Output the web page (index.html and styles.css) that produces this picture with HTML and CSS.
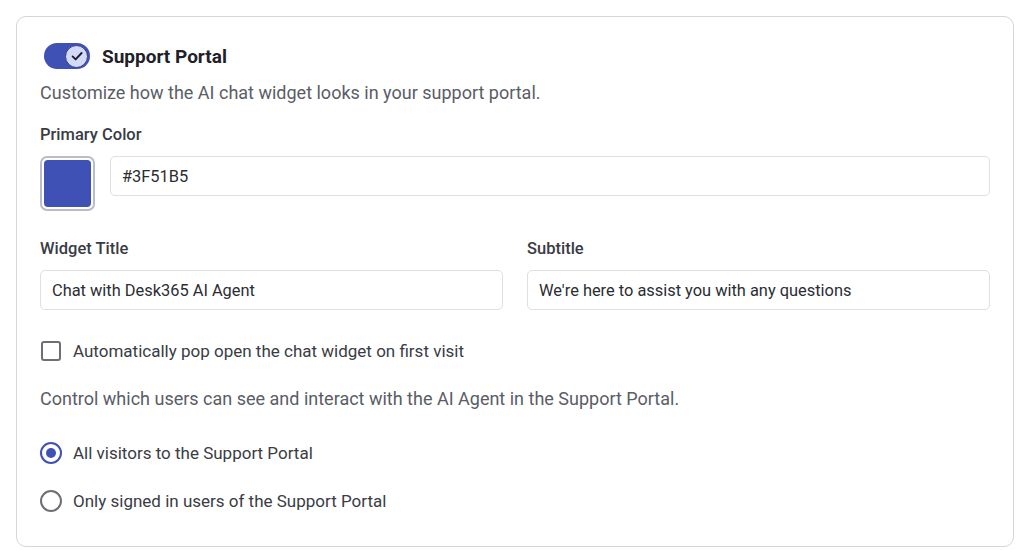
FILE: index.html
```html
<!DOCTYPE html>
<html lang="en">
<head>
    <meta charset="UTF-8">
    <meta name="viewport" content="width=device-width, initial-scale=1.0">
    <title>Support Portal</title>
    <link rel="stylesheet" href="styles.css">
</head>
<body>
    <div class="card">
        <!-- 开关 + 标题 -->
        <div class="card-head">
            <span class="switch">
                <span class="switch-thumb">
                    <svg width="16" height="16" viewBox="0 0 16 16"><path d="M3.6 8.4l3 3L12.6 5" fill="none" stroke="#1b1d2b" stroke-width="1.9" stroke-linecap="round" stroke-linejoin="round"/></svg>
                </span>
            </span>
            <span class="card-title">Support Portal</span>
        </div>
        <p class="desc">Customize how the AI chat widget looks in your support portal.</p>

        <div class="label label-first">Primary Color</div>
        <div class="color-row">
            <span class="swatch"><span class="swatch-fill"></span></span>
            <div class="field">#3F51B5</div>
        </div>

        <div class="two-col">
            <div>
                <div class="label">Widget Title</div>
                <div class="field">Chat with Desk365 AI Agent</div>
            </div>
            <div>
                <div class="label">Subtitle</div>
                <div class="field">We're here to assist you with any questions</div>
            </div>
        </div>

        <label class="check-row">
            <span class="checkbox"></span>
            Automatically pop open the chat widget on first visit
        </label>

        <p class="desc desc-access">Control which users can see and interact with the AI Agent in the Support Portal.</p>

        <div class="radios">
            <label class="radio-row"><span class="radio radio-on"></span>All visitors to the Support Portal</label>
            <label class="radio-row"><span class="radio"></span>Only signed in users of the Support Portal</label>
        </div>
    </div>
</body>
</html>
```

FILE: styles.css
```css
*{
    margin: 0;
    padding: 0;
    box-sizing: border-box;
}
body{
    background: #fff;
    font-family: Roboto, "Liberation Sans", sans-serif;
    color: #2b2d33;
}
.card{
    margin: 16px 10px 0 16px;
    border: 1px solid #d6d6da;
    border-radius: 10px;
    padding: 25px 23px 33px 23px;
}
.card-head{
    display: flex;
    align-items: center;
    height: 28px;
    padding-left: 4px;
}
.switch{
    width: 46px;
    height: 26px;
    border-radius: 13px;
    background: #3f51b5;
    display: flex;
    align-items: center;
    justify-content: flex-end;
    padding-right: 2px;
}
.switch-thumb{
    width: 23px;
    height: 23px;
    border-radius: 50%;
    background: #d3daf7;
    border: 1px solid #2f3c8a;
    display: flex;
    align-items: center;
    justify-content: center;
}
.card-title{
    margin-left: 12px;
    font-size: 19px;
    font-weight: 700;
    color: #1f2128;
}
.desc{
    margin-top: 11px;
    font-size: 18px;
    line-height: 24px;
    color: #5a5d66;
}
.label{
    font-size: 16.5px;
    font-weight: 500;
    line-height: 22px;
    color: #3a3c44;
    margin-bottom: 10px;
}
.label-first{
    margin-top: 19px;
}
.color-row{
    display: flex;
    align-items: flex-start;
    gap: 15px;
}
.swatch{
    width: 55px;
    height: 55px;
    border: 2px solid #b9bccb;
    border-radius: 7px;
    padding: 2px;
    flex: none;
}
.swatch-fill{
    display: block;
    width: 100%;
    height: 100%;
    background: #3f51b5;
    border-radius: 4px;
}
.field{
    flex: 1;
    height: 40px;
    border: 1px solid #dedfe3;
    border-radius: 5px;
    padding: 0 11px;
    display: flex;
    align-items: center;
    font-size: 16.4px;
    color: #2b2d33;
}
.two-col{
    margin-top: 27px;
    display: grid;
    grid-template-columns: 1fr 1fr;
    gap: 24px;
}
.check-row{
    margin-top: 29px;
    display: flex;
    align-items: center;
    height: 24px;
    font-size: 17px;
    color: #3a3c44;
}
.checkbox{
    width: 20px;
    height: 20px;
    margin: 0 12px 0 1px;
    border: 2px solid #6d6f76;
    border-radius: 3px;
}
.desc-access{
    margin-top: 24px;
}
.radios{
    margin-top: 30px;
    display: flex;
    flex-direction: column;
    gap: 24px;
}
.radio-row{
    display: flex;
    align-items: center;
    height: 24px;
    font-size: 17px;
    color: #3a3c44;
}
.radio{
    width: 22px;
    height: 22px;
    margin-right: 11px;
    border: 2px solid #6d6f76;
    border-radius: 50%;
    display: flex;
    align-items: center;
    justify-content: center;
}
.radio-on{
    border-color: #3f51b5;
}
.radio-on::after{
    content: "";
    width: 10px;
    height: 10px;
    border-radius: 50%;
    background: #3f51b5;
}
```
